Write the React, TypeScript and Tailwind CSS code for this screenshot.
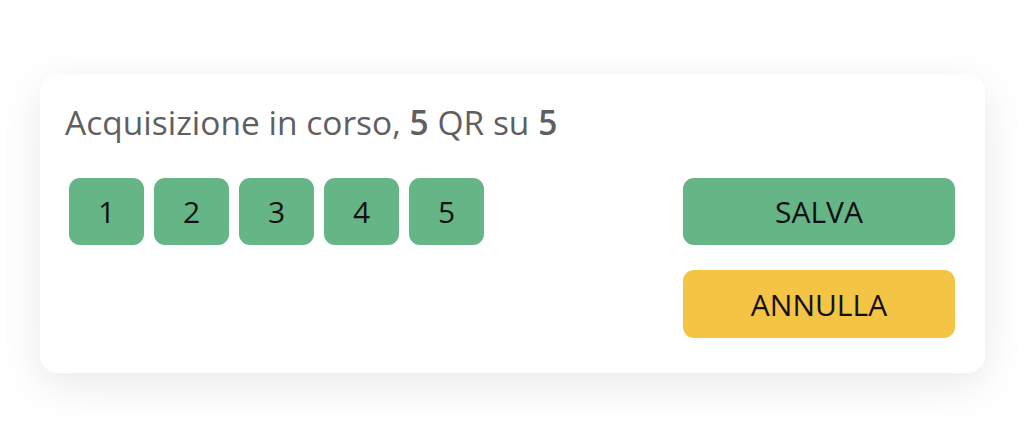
const codes = [1, 2, 3, 4, 5]

export default function App() {
  return (
    <div className="min-h-[432px] bg-white pt-[74px] px-[40px] font-['Open_Sans','Noto_Sans',sans-serif]">
      <div className="w-[945px] rounded-[18px] bg-white shadow-[0_12px_44px_rgba(0,0,0,0.09)] pt-[28px] pb-[35px] pl-[25px] pr-[30px]">
        <p className="text-[33.5px] leading-[40px] text-[#5f5f5f]">
          Acquisizione in corso, <span className="font-semibold">5</span> QR su <span className="font-semibold">5</span>
        </p>

        <div className="mt-[36px] flex justify-between items-start">
          <div className="flex gap-[10px] pl-[4px]">
            {codes.map((n) => (
              <div
                key={n}
                className="w-[75px] h-[67px] rounded-[11px] bg-[#65b587] flex items-center justify-center text-[30px] text-[#111]"
              >
                {n}
              </div>
            ))}
          </div>

          <div className="w-[272px] flex flex-col gap-[25px]">
            <button className="h-[67px] rounded-[11px] bg-[#65b587] text-[30px] font-medium text-[#111]">
              SALVA
            </button>
            <button className="h-[68px] rounded-[11px] bg-[#f4c544] text-[30px] font-medium text-[#111]">
              ANNULLA
            </button>
          </div>
        </div>
      </div>
    </div>
  )
}
